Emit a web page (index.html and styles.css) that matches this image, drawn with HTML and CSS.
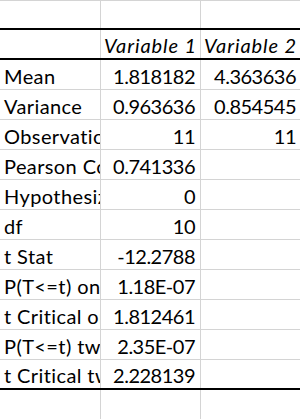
FILE: index.html
```html
<!DOCTYPE html>
<html>
<head>
<meta charset="utf-8">
<link rel="stylesheet" href="styles.css">
</head>
<body>
<div class="sheet">
  <div class="row first"><div class="c"></div><div class="c"></div><div class="c"></div></div>
  <div class="row head"><div class="c"></div><div class="c it">Variable 1</div><div class="c it">Variable 2</div></div>
  <div class="row"><div class="c lbl">Mean</div><div class="c num">1.818182</div><div class="c num">4.363636</div></div>
  <div class="row"><div class="c lbl">Variance</div><div class="c num">0.963636</div><div class="c num">0.854545</div></div>
  <div class="row"><div class="c lbl">Observations</div><div class="c num">11</div><div class="c num">11</div></div>
  <div class="row"><div class="c lbl">Pearson Correlation</div><div class="c num">0.741336</div><div class="c"></div></div>
  <div class="row"><div class="c lbl">Hypothesized Mean Difference</div><div class="c num">0</div><div class="c"></div></div>
  <div class="row"><div class="c lbl">df</div><div class="c num">10</div><div class="c"></div></div>
  <div class="row"><div class="c lbl">t Stat</div><div class="c num">-12.2788</div><div class="c"></div></div>
  <div class="row"><div class="c lbl">P(T&lt;=t) one-tail</div><div class="c num">1.18E-07</div><div class="c"></div></div>
  <div class="row"><div class="c lbl">t Critical one-tail</div><div class="c num">1.812461</div><div class="c"></div></div>
  <div class="row"><div class="c lbl">P(T&lt;=t) two-tail</div><div class="c num">2.35E-07</div><div class="c"></div></div>
  <div class="row last"><div class="c lbl">t Critical two-tail</div><div class="c num">2.228139</div><div class="c"></div></div>
  <div class="row tail"><div class="c"></div><div class="c"></div><div class="c"></div></div>
</div>
</body>
</html>
```

FILE: styles.css
```css
html, body {
  margin: 0;
  padding: 0;
  background: #fff;
}
body {
  width: 300px;
  height: 419px;
  overflow: hidden;
  font-family: Lato, "Open Sans", sans-serif;
  font-size: 20px;
  color: #000;
}
.sheet {
  border-top: 1px solid #d4d4d4;
}
.row {
  display: grid;
  grid-template-columns: 101px 100px 100px;
  height: 30px;
  box-sizing: border-box;
  border-bottom: 1px solid #d4d4d4;
}
.row.first {
  height: 29px;
  border-bottom: 2px solid #000;
}
.row.head {
  height: 30px;
  border-bottom: 2px solid #000;
}
.row.last {
  border-bottom: 2px solid #000;
}
.row.tail {
  height: 40px;
  border-bottom: none;
}
.c {
  box-sizing: border-box;
  border-right: 1px solid #d4d4d4;
  overflow: hidden;
  white-space: nowrap;
  display: flex;
  align-items: flex-end;
  padding: 0 4px 2px 4px;
  line-height: 22px;
}
.c:last-child {
  border-right: none;
}
.lbl {
  justify-content: flex-start;
  padding-left: 4px;
  padding-right: 0;
  letter-spacing: 0.4px;
}
.num {
  justify-content: flex-end;
  padding-right: 5px;
  letter-spacing: -0.5px;
}
.it {
  font-style: italic;
  justify-content: flex-start;
  padding-left: 3px;
  letter-spacing: 0.9px;
}
```
